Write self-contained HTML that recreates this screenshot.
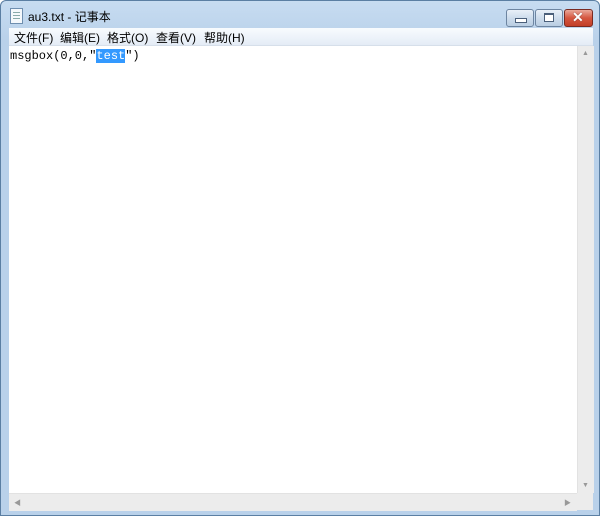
<!DOCTYPE html>
<html><head><meta charset="utf-8"><style>
body{margin:0;width:600px;height:516px;overflow:hidden;background:#fff;font-family:"Liberation Sans","Noto Sans CJK SC",sans-serif}
#win{position:absolute;left:0;top:0;width:598px;height:514px;border:1px solid #5b7fa3;border-radius:6px 6px 0 0;background:linear-gradient(#c7dcf1,#b9d1ea 40px,#b9d1ea)}
.t{position:absolute;left:27px;top:7px;font-size:12px;color:#000}
.ic{position:absolute;left:9px;top:7px;width:11px;height:14px;background:#f4f8fc;border:1px solid #6f8fb0}
.ic i{position:absolute;left:2px;right:2px;height:1px;background:#8aa}
.b{position:absolute;top:8px;height:16px;border:1px solid #6d85a1;border-radius:3px;background:linear-gradient(#e9f0f8,#cddcec 50%,#b9cde2)}
#menu{position:absolute;left:8px;top:27px;width:584px;height:17px;background:linear-gradient(#f8fbfe,#e4ecf6);font-size:12px;border-bottom:1px solid #d6dfea}
#menu span{position:absolute;top:1px}
#edit{position:absolute;left:8px;top:45px;width:584px;height:464px;background:#fff;border:0}
pre{margin:0;position:absolute;left:1px;top:3px;font:12px "Liberation Mono",monospace;color:#000}
.sel{background:#3399ff;color:#fff}
#vs{position:absolute;left:568px;top:0;width:16px;height:447px;background:#ececec;border-left:1px solid #e2e2e2}
#hs{position:absolute;left:0;top:447px;width:568px;height:17px;background:#ececec;border-top:1px solid #e2e2e2}
#cn{position:absolute;left:568px;top:447px;width:16px;height:17px;background:#ececec}
.ar{position:absolute;font-size:7px;color:#999}
</style></head><body><div id="win">
<div class="ic"><i style="top:3px"></i><i style="top:6px"></i><i style="top:9px"></i></div>
<div class="t">au3.txt - 记事本</div>
<div class="b" style="left:505px;width:26px"><div style="position:absolute;left:8px;top:8px;width:10px;height:3px;background:#fff;border:1px solid #4a5f7a"></div></div>
<div class="b" style="left:534px;width:26px"><div style="position:absolute;left:8px;top:3px;width:8px;height:6px;border:1px solid #4a5f7a;border-top-width:2px;background:#fff"></div></div>
<div class="b" style="left:563px;width:27px;border-color:#7a2a21;background:linear-gradient(#eaa89a,#d5563f 50%,#c23e27)"><div style="position:absolute;left:7px;top:-1px;color:#fff;font:bold 14px 'Liberation Sans';text-shadow:0 0 1px #522">✕</div></div>
<div id="menu"><span style="left:5px">文件(F)</span><span style="left:51px">编辑(E)</span><span style="left:98px">格式(O)</span><span style="left:147px">查看(V)</span><span style="left:195px">帮助(H)</span></div>
<div id="edit"><pre>msgbox(0,0,"<span class="sel">test</span>")</pre>
<div id="vs"><span class="ar" style="left:4px;top:4px">▲</span><span class="ar" style="left:4px;top:436px">▼</span></div>
<div id="hs"><span class="ar" style="left:5px;top:4px">◀</span><span class="ar" style="left:555px;top:4px">▶</span></div>
<div id="cn"></div>
</div>
</div></body></html>
